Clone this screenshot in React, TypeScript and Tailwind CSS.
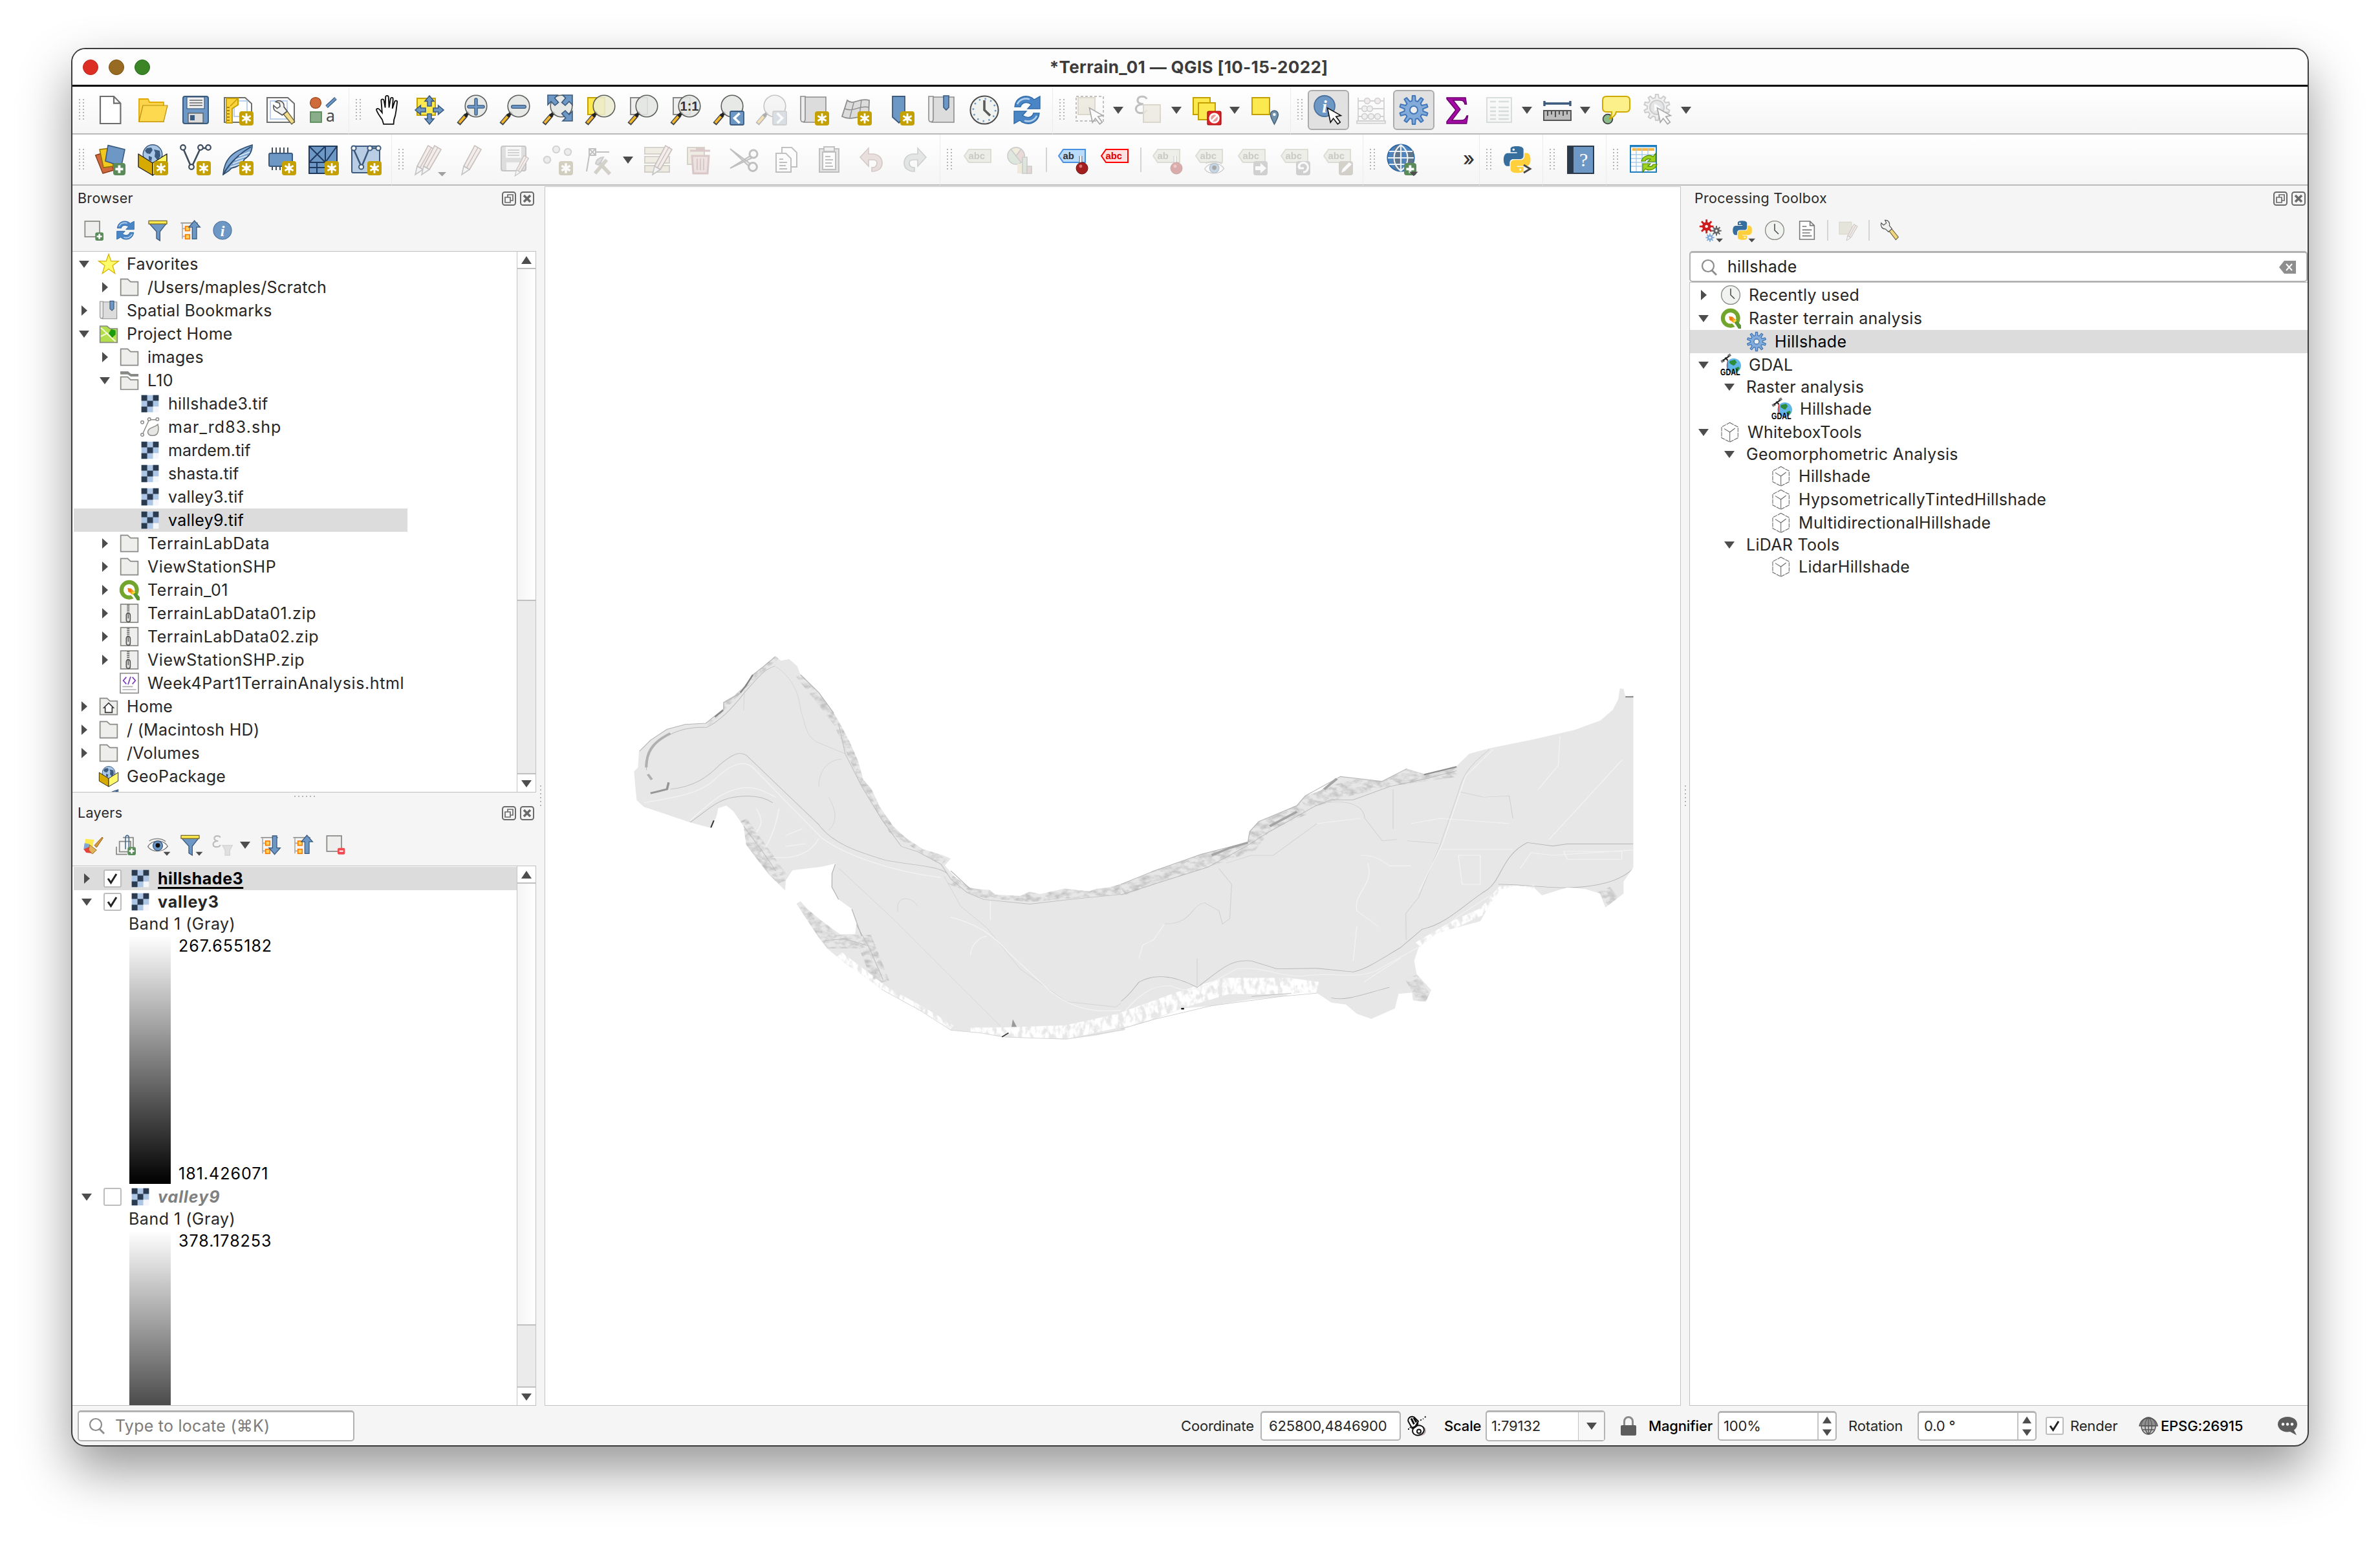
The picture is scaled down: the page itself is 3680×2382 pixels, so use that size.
import React from "react";

type Kids = { children?: React.ReactNode };

const BLUE = "#6d97c4";
const NAVY = "#3b5a7d";
const GOLD = "#c4a000";
const YEL = "#fce94f";
const GRY = "#888a85";

function gearPath(cx: number, cy: number, ro: number, ri: number, n: number) {
  let d = "";
  for (let i = 0; i < n; i++) {
    const a = (i / n) * Math.PI * 2 - Math.PI / 2;
    const s = Math.PI / n;
    const pts: [number, number][] = [
      [ri, a - s * 0.6],
      [ro, a - s * 0.32],
      [ro, a + s * 0.32],
      [ri, a + s * 0.6],
    ];
    for (const [r, t] of pts) d += `${d ? "L" : "M"}${(cx + r * Math.cos(t)).toFixed(2)} ${(cy + r * Math.sin(t)).toFixed(2)}`;
  }
  return d + "Z";
}

function Svg({ children, small, dim }: Kids & { small?: boolean; dim?: boolean }) {
  return (
    <svg viewBox="0 0 24 24" fill="none" className={`${small ? "h-8 w-8" : "h-12 w-12"} shrink-0 overflow-visible ${dim ? "opacity-35" : ""}`}>
      {children}
    </svg>
  );
}

/* ---------- shared icon parts ---------- */
const Star = () => (
  <g>
    <rect x="13" y="13" width="11" height="11" rx="2" fill={GOLD} />
    <path d="M18.500 14.600v7.800M15.200 16.600l6.600 3.800M21.800 16.600l-6.600 3.800" stroke="#fff" strokeWidth="1.400" />
    <circle cx="18.500" cy="18.500" r="1.700" fill="#fff" />
  </g>
);
const Plus = () => (
  <g>
    <rect x="14.500" y="14.500" width="9.500" height="9.500" rx="2" fill="#5a8c5a" />
    <path d="M19.200 16.200v6M16.200 19.200h6" stroke="#fff" strokeWidth="1.900" />
  </g>
);
const Drop = () => <path d="M18.500 21.200h6.800l-3.400 3.400z" fill="#4d4d4d" />;
const Lens = ({ children, fill = "#e4e6e4" }: Kids & { fill?: string }) => (
  <g>
    <path d="M1.500 22.800L7.500 15.800" stroke="#444" strokeWidth="3.400" />
    <path d="M2 22L6.600 16.800" stroke="#f2b62c" strokeWidth="1.900" />
    <path d="M6.400 17L9.600 13.600" stroke="#222" strokeWidth="2.400" />
    <circle cx="15" cy="9" r="8.400" fill={fill} fillOpacity=".88" stroke="#5d5f5c" strokeWidth=".8" />
    {children}
  </g>
);
const Page = () => <path d="M3 2.500h14l4.500 4.600V21.500H3z" fill="#fff" stroke="#6e6e6e" strokeWidth="1" />;
const Scroll = () => (
  <g stroke="#8c8c8c" strokeWidth=".8">
    <path d="M4.500 2h17v19.500H4.500z" fill="#dcdcdc" />
    <path d="M2 1.500h3.500v17.500c0 3-3.500 3-3.500 0z" fill="#ececec" />
  </g>
);
const Cursor = () => <path d="M12.500 9.500v11.500l2.800-2.600 2.400 5 2.200-1-2.300-4.900h3.900z" transform="rotate(-12 16 16)" fill="#fff" stroke="#111" strokeWidth=".8" />;
const Tag = ({ fill = "#d6d6c6", stroke = "#a5a591", text = "abc", color = "#6f6f63" }) => (
  <g>
    <path d="M5 4h17v10H5L1.500 9z" fill={fill} stroke={stroke} strokeWidth="1" />
    <text x="4.800" y="11.600" fontSize="7.400" letterSpacing="0" fontFamily="Liberation Sans, sans-serif" fontWeight="700" fill={color}>{text}</text>
  </g>
);
const Wrench = () => (
  <g>
    <path d="M11.500 12L20.500 23l2.300-2.200-8-11z" fill="#f2dc8a" stroke="#6b6240" strokeWidth=".7" />
    <path d="M9.500 13.500c-2.500-.5-3.500-2.800-3-5l2.700 2.300 2.300-1.500-.4-2.600-3-1c2.600-2 7-.2 6.400 4L17 13l-3.800 3z" fill="#f0f0ee" stroke="#555" strokeWidth=".8" />
  </g>
);
const Funnel = () => (
  <g>
    <path d="M2 4h20l-7.500 9.500V24l-4-2.500v-8z" fill={BLUE} stroke={NAVY} strokeWidth="1" />
    <rect x="1.500" y="1" width="21" height="3.600" fill={YEL} stroke="#6e6020" strokeWidth=".9" />
  </g>
);
const Arrows = () => (
  <g>
    <path d="M2.500 9.500C3 3 9.500-.5 15.800 2.600L17.500 4 22 1.500V11H12.500l3-3.200C12 5.300 8 6 7 9.500z" fill="#4a86c6" stroke="#2f6aa8" strokeWidth=".7" />
    <path d="M21.500 14.500c-.5 6.500-7 10-13.300 6.900L6.500 20 2 22.500V13h9.500l-3 3.200c3.500 2.500 7.500 1.800 8.500-1.700z" fill="#4a86c6" stroke="#2f6aa8" strokeWidth=".7" />
    <path d="M4.500 7.500C6 4 10 2.500 14 3.700" stroke="#b7d2ec" strokeWidth="1.200" />
    <path d="M19.500 16.500C18 20 14 21.500 10 20.300" stroke="#b7d2ec" strokeWidth="1.200" />
  </g>
);
const Box = () => (
  <g stroke="#222" strokeWidth=".7" strokeLinejoin="round">
    <circle cx="12" cy="7.800" r="7.400" fill="#a9c6e6" stroke={NAVY} />
    <path d="M7.500 3l3.500-.5 1 2-2 3-2.500-.5-1.500-2zM13 4l4.500 1 .5 4-2 3.500-2.500-3 .5-3zM9 9l2.500 1-.5 3-2-1z" fill={NAVY} stroke="none" />
    <path d="M1 7.500l11 7v9.500L1 17.500z" fill="#d6aa00" />
    <path d="M23 7.500l-11 7V24l11-6.500z" fill="#fff86a" />
  </g>
);
const Tree = () => (
  <g>
    <path d="M1 3.500h20" stroke={GRY} strokeWidth="1.200" />
    <path d="M3 4v18M3 10h4M3 19h4" stroke="#aaa" strokeWidth="1.200" />
    <rect x="6.500" y="7.500" width="5" height="5" fill="#ffd35c" stroke="#f57900" strokeWidth="1.200" />
    <rect x="6.500" y="17" width="5" height="5" fill="#ffd35c" stroke="#f57900" strokeWidth="1.200" />
  </g>
);
const Eye = () => (
  <g>
    <path d="M.5 14C5 6 18 5 23.500 13.500 18 21 5 21 .5 14z" fill="#fff" stroke="#777" strokeWidth="1" />
    <circle cx="12" cy="13" r="5.600" fill={BLUE} stroke={NAVY} />
    <circle cx="12" cy="12.500" r="2.600" fill="#111" />
    <path d="M2 7.500C7 4 16 4 21 8" stroke="#888" strokeWidth="1.100" />
  </g>
);
const Clock = ({ plain = false }) => (
  <g>
    <circle cx="12" cy="12" r="10.800" fill="#f0f3f0" stroke={plain ? GRY : "#4b4b4b"} strokeWidth="1" />
    {!plain && <circle cx="12" cy="12" r="8.600" stroke={BLUE} strokeWidth="1.300" strokeDasharray="1.200 3.300" />}
    <path d="M12 4.500V12l4.500 4.300" stroke={plain ? "#444" : "#5a5a5a"} strokeWidth={plain ? 1.1 : 1.8} />
  </g>
);
const Python = () => (
  <g>
    <path fill="#366f9e" d="M14.25.18l.9.2.73.26.59.3.45.32.34.34.25.34.16.33.1.3.04.26.02.2-.01.13V8.5l-.05.63-.13.55-.21.46-.26.38-.3.31-.33.25-.35.19-.35.14-.33.1-.3.07-.26.04-.21.02H8.77l-.69.05-.59.14-.5.22-.41.27-.33.32-.27.35-.2.36-.15.37-.1.35-.07.32-.04.27-.02.21v3.06H3.17l-.21-.03-.28-.07-.32-.12-.35-.18-.36-.26-.36-.36-.35-.46-.32-.59-.28-.73-.21-.88-.14-1.05-.05-1.23.06-1.22.16-1.04.24-.87.32-.71.36-.57.4-.44.42-.33.42-.24.4-.16.36-.1.32-.05.24-.01h.16l.06.01h8.16v-.83H6.18l-.01-2.75-.02-.37.05-.34.11-.31.17-.28.25-.26.31-.23.38-.2.44-.18.51-.15.58-.12.64-.1.71-.06.77-.04.84-.02 1.27.05z" />
    <path fill="#ffd03b" d="M21.1 6.11l.28.06.32.12.35.18.36.27.36.35.35.47.32.59.28.73.21.88.14 1.04.05 1.23-.06 1.23-.16 1.04-.24.86-.32.71-.36.57-.4.45-.42.33-.42.24-.4.16-.36.09-.32.05-.24.02-.16-.01h-8.22v.82h5.84l.01 2.76.02.36-.05.34-.11.31-.17.29-.25.25-.31.24-.38.2-.44.17-.51.15-.58.13-.64.09-.71.07-.77.04-.84.01-1.27-.04-1.07-.14-.9-.2-.73-.25-.59-.3-.45-.33-.34-.34-.25-.34-.16-.33-.1-.3-.04-.25-.02-.2.01-.13v-5.34l.05-.64.13-.54.21-.46.26-.38.3-.32.33-.24.35-.2.35-.14.33-.1.3-.06.26-.04.21-.02.13-.01h5.84l.69-.05.59-.14.5-.21.41-.28.33-.32.27-.35.2-.36.15-.36.1-.35.07-.32.04-.28.02-.21V6.07h2.09l.14.01z" />
    <circle cx="8.900" cy="3.100" r="1" fill="#fff" />
    <circle cx="15" cy="21" r="1" fill="#fff" />
  </g>
);
const Pin = () => (
  <g>
    <path d="M18.500 16V9" stroke="#777" strokeWidth="2.400" />
    <path d="M18.500 16V9" stroke="#fff" strokeWidth="1.200" />
    <circle cx="19.500" cy="18.500" r="4.500" fill="#a31f1f" stroke="#6b1111" strokeWidth=".5" />
    <circle cx="18.500" cy="17" r="1.200" fill="#d77" />
  </g>
);
const GearI = () => (
  <g stroke="#4077bb" strokeWidth="1" strokeLinejoin="round">
    <path d={gearPath(12, 12, 11, 7.2, 10)} fill="#83abd9" />
    <circle cx="12" cy="12" r="3" fill="#eee" />
  </g>
);
const Info = ({ cx = 12, cy = 12, r = 10.5 }) => (
  <g>
    <circle cx={cx} cy={cy} r={r} fill={BLUE} stroke="#4a719d" strokeWidth=".9" />
    <text x={cx} y={cy + r * 0.62} textAnchor="middle" letterSpacing="0" fontSize={r * 1.7} fontStyle="italic" fontWeight="700" fontFamily="Liberation Serif, serif" fill="#fff">i</text>
  </g>
);
const Pencil = ({ x = 0 }) => (
  <g transform={`translate(${x} 0)`}>
    <path d="M6 17L14.500 1l5 3L10.500 19.500z" fill="#e2d3cb" stroke="#6b4f4a" strokeWidth=".8" />
    <path d="M6 17l-1.500 6.500 6-4z" fill="#eee" stroke="#666" strokeWidth=".8" />
    <path d="M8.300 18L17 2.500" stroke="#6b4f4a" strokeWidth=".7" />
  </g>
);
/* reversed-three epsilon used by the expression tools */
const Eps = ({ x = 0 }) => <path d="M9.500 3.500C8.500 1 3 .8 2.500 4.200 2.300 6.500 4.500 7.500 7 7.500 3.500 7.500 1 8.800 1.200 11.500 1.500 15.500 8.500 15 9.500 12" transform={`translate(${x} 0)`} stroke="#555" strokeWidth="1.600" />;

/* ---------- icon set ---------- */
const icons: Record<string, React.ReactNode> = {
  new: <path d="M4.500 1.500H15l5.200 5.300V22.500H4.500zM15 1.500v5.300h5.200" fill="#fff" stroke="#6e6e6e" strokeWidth="1.100" />,
  open: (
    <g stroke="#e0a800" strokeWidth=".9" strokeLinejoin="round">
      <path d="M1.500 3.500h7l1 2.500h11v15H1.500z" fill="#fbd44b" />
      <path d="M4.500 8.500h19L20.500 21H1.500z" fill="#fdd94f" stroke="#b98e10" strokeWidth=".6" />
    </g>
  ),
  save: (
    <g>
      <rect x="2.500" y="1.500" width="19.500" height="21" rx="1.500" fill={BLUE} stroke={NAVY} strokeWidth="1" />
      <rect x="5.500" y="2" width="13.500" height="9" fill="#f0f0f0" stroke={NAVY} strokeWidth=".6" />
      <path d="M7.500 4.500h10M7.500 6.500h10M7.500 8.500h10" stroke="#666" strokeWidth=".8" />
      <rect x="6.500" y="14.500" width="11.500" height="7.500" fill="#dcdcdc" stroke="#555" strokeWidth=".6" />
      <rect x="8" y="16" width="3.500" height="4" fill={NAVY} />
    </g>
  ),
  layout: (
    <g>
      <path d="M1.500 2.500h16l5 4.600V21.500h-21z" fill="#fff" stroke="#6e6e6e" />
      <path d="M9 5h10v12H9z" stroke="#bcd0ef" />
      <path d="M3 3h9v5L7.500 11v11H3z" fill="#fbd23c" stroke={GOLD} />
      <path d="M11.500 3.500L6 9" stroke={GOLD} strokeWidth=".8" />
      <path d="M3.500 10h2M3.500 12.500h2M3.500 15h2M3.500 17.500h2M3.500 20h2" stroke="#8a6c00" strokeWidth=".8" />
      <Star />
    </g>
  ),
  layoutMgr: (
    <g>
      <path d="M1.500 2.500h16l5 4.600V21.500h-21z" fill="#fff" stroke="#6e6e6e" />
      <path d="M4 5h13v14H4z" stroke="#bcd0ef" />
      <Wrench />
    </g>
  ),
  style: (
    <g>
      <circle cx="6" cy="6.500" r="4.200" fill="#cf6b3a" stroke="#9c4a22" strokeWidth=".7" />
      <path d="M14.500 9.500L21.500 3" stroke="#35577d" strokeWidth="2.600" />
      <path d="M14.500 9.500L21.500 3" stroke={BLUE} strokeWidth="1.500" />
      <rect x="2" y="13.500" width="8.500" height="8" fill="#8aae8a" stroke="#5a8c5a" strokeWidth=".9" />
      <text x="14" y="21" fontSize="12.500" letterSpacing="0" fontFamily="Open Sans, sans-serif" fill="#444">a</text>
    </g>
  ),
  hand: (
    <path
      d="M8.500 23l-1-3.500C5.500 16.500 4 14.500 3.200 12c-.3-1.300 1.300-1.800 2.200-.5l2 2.500L6.700 4.500c0-1.500 1.900-1.500 2.100 0L9.700 10 10 1.700c0-1.500 2.100-1.500 2.200 0l.4 8.300 1.100-7c.2-1.400 2-1.100 1.900.2l-.5 7.500 1.700-5.400c.5-1.300 2.100-.9 1.900.4L17.800 13c-.3 3-.8 4.500-1.500 6.500l-.3 3.500z"
      transform="translate(.8 .4) scale(1.030 .98)"
      fill="#fff"
      stroke="#111"
      strokeWidth=".9"
    />
  ),
  pan: (
    <g>
      <path d="M2.500 3h14v13h-14z" fill={YEL} stroke={GOLD} />
      <path d="M12 1l3.500 4.200h-2V9h-3V5.200h-2zM12 23l3.500-4.200h-2V15h-3v3.800h-2zM1 12l4.200-3.500v2H9v3H5.200v2zM23 12l-4.200-3.500v2H15v3h3.800v2z" fill={BLUE} stroke={NAVY} strokeWidth=".8" />
    </g>
  ),
  zoomIn: (
    <Lens>
      <path d="M15 4v11M9.500 9.500h11" stroke={NAVY} strokeWidth="2.800" strokeLinecap="round" />
      <path d="M15 4v11M9.500 9.500h11" stroke={BLUE} strokeWidth="1.600" strokeLinecap="round" />
    </Lens>
  ),
  zoomOut: (
    <Lens>
      <path d="M10.500 9.500h9" stroke={NAVY} strokeWidth="3" strokeLinecap="round" />
      <path d="M10.500 9.500h9" stroke={BLUE} strokeWidth="1.800" strokeLinecap="round" />
    </Lens>
  ),
  zoomFull: (
    <g>
      <Lens />
      <g fill={BLUE} stroke={NAVY} strokeWidth=".8">
        <path d="M4.500.5h7.500L9.800 2.800l3 3.400L10 8.500 7 5.500 4.500 8z" />
        <path d="M23.500.5H16l2.300 2.300-3 3.400L18 8.500l3-3L23.500 8z" />
        <path d="M23.500 20.500H16l2.300-2.300-3-3.400L18 12.500l3 3 2.500-2.500z" />
      </g>
    </g>
  ),
  zoomSel: (
    <g>
      <rect x="2.500" y="2.500" width="13" height="13" fill={YEL} stroke={GOLD} />
      <Lens fill="#ececd2" />
    </g>
  ),
  zoomLayer: (
    <g>
      <rect x="2.500" y="2.500" width="13" height="13" fill="#eee" stroke="#888" />
      <Lens />
    </g>
  ),
  zoomNative: (
    <g>
      <rect x="2.500" y="2.500" width="13" height="13" fill="#eee" stroke="#888" />
      <Lens>
        <text x="15" y="12.600" textAnchor="middle" letterSpacing="0" fontSize="10" fontWeight="700" fontFamily="Liberation Sans, sans-serif" fill="#333">1:1</text>
      </Lens>
    </g>
  ),
  zoomLast: (
    <g>
      <Lens />
      <rect x="13.500" y="13" width="10.500" height="10.500" rx="1" fill={BLUE} stroke={NAVY} strokeWidth=".9" />
      <path d="M20.800 14.500l-4 3.800 4 3.800" stroke="#fff" strokeWidth="1.800" />
    </g>
  ),
  zoomNext: (
    <g>
      <Lens />
      <rect x="13.500" y="13" width="10.500" height="10.500" rx="1" fill="#9fb0bd" stroke="#888" strokeWidth=".9" />
      <path d="M16.800 14.500l4 3.800-4 3.800" stroke="#fff" strokeWidth="1.800" />
    </g>
  ),
  newMap: <g><Scroll /><Star /></g>,
  new3d: (
    <g>
      <path d="M5 4.500C10 9 14 2 22 4.500L21.500 18c-7-3-13 3-20.500-1z" fill="#dcdcdc" stroke="#8c8c8c" strokeWidth=".9" />
      <path d="M3 11c7 3 11-3 19-1M10 6.500L7 18M16 4l-1.500 12" stroke="#8c8c8c" strokeWidth=".7" />
      <Star />
    </g>
  ),
  newBm: <g><path d="M7 1.500h9.500v16L12 22l-5-4.500z" fill={BLUE} stroke={NAVY} strokeWidth=".9" /><Star /></g>,
  bookmarks: <g><Scroll /><path d="M13.500 1h4v9l-2 2-2-2z" fill={BLUE} stroke={NAVY} strokeWidth=".8" /></g>,
  clock: <Clock />,
  refresh: <Arrows />,
  select: (
    <g>
      <rect x="1" y="1.500" width="21" height="19" stroke="#555" strokeDasharray="2 1.500" />
      <rect x="2.500" y="2.500" width="13" height="13" fill="#d4ccb4" stroke="#a39a7a" />
      <Cursor />
    </g>
  ),
  selVal: (
    <g>
      <Eps x={1} />
      <rect x="8" y="8" width="13" height="13.500" fill="#d4ccb4" fillOpacity=".8" stroke="#a39a7a" />
    </g>
  ),
  deselect: (
    <g>
      <rect x="1.500" y="2.500" width="13" height="13" fill={YEL} stroke={GOLD} />
      <rect x="5.500" y="6.500" width="13" height="13" fill={YEL} stroke={GOLD} />
      <rect x="12.500" y="13" width="10.500" height="10.500" rx="1" fill="#d8262a" stroke="#a40000" strokeWidth=".6" />
      <circle cx="17.800" cy="18.300" r="3.400" fill="#e99" stroke="#fff" strokeWidth="1.400" />
      <path d="M15.500 20.700l4.700-4.700" stroke="#fff" strokeWidth="1.400" />
    </g>
  ),
  selLoc: (
    <g>
      <rect x="2" y="2.500" width="13.500" height="13" fill={YEL} stroke={GOLD} />
      <path d="M19.200 23c-2-4-3-5.500-3-7.500a3 3 0 016 0c0 2-1 3.500-3 7.500z" fill="#7293ab" stroke="#47657c" strokeWidth=".8" />
      <circle cx="19.200" cy="15.500" r="1.100" fill="#fff" />
    </g>
  ),
  identify: <g><Info cx={9} cy={9} r={8} /><Cursor /></g>,
  abacus: (
    <g stroke="#888" strokeWidth=".9">
      <path d="M2 2.500v18M22 2.500v18M2 5h20M2 11h20M2 17h20M1 20.500h22v1.800H1z" />
      {[[9, 5], [17, 5], [7, 11], [11, 11], [7, 17], [12, 17], [17, 17]].map(([x, y], i) => (
        <circle key={i} cx={x} cy={y} r="2.200" fill={y === 5 ? "#dcc" : "#dedede"} />
      ))}
    </g>
  ),
  gear: <GearI />,
  sigma: <path d="M4.500 2.500h14.500l.8 5h-1.300c-.7-2.500-1.500-3-4-3H9.500l5.500 7-6.500 8.500h7c2.500 0 3.500-.8 4.500-3.500h.8l-1 6H4.500v-1.500L11.500 12 4.500 3.500z" fill="#a40aa4" stroke="#66006a" strokeWidth=".7" />,
  table: (
    <g>
      <rect x="2.500" y="2.500" width="19" height="19" fill="#f5f5f5" stroke="#9aa" />
      <path d="M5 5.500h4.500M11.500 5.500h8M5 10h4.500M11.500 10h8M5 13h4.500M11.500 13h8M5 16h4.500M11.500 16h8M5 19h4.500M11.500 19h8" stroke="#9aa" strokeWidth="1.300" />
    </g>
  ),
  measure: (
    <g>
      <path d="M2 7h20M2 5v4M22 5v4" stroke={NAVY} strokeWidth="1.700" />
      <rect x="1.500" y="12.500" width="21" height="7.500" fill="#bdbdbd" stroke="#555" />
      <path d="M4.500 13v3.500M7.500 13v2.500M10.500 13v4.500M13.500 13v2.500M16.500 13v3.500M19.500 13v2.500" stroke="#333" strokeWidth=".8" />
    </g>
  ),
  tips: (
    <g>
      <circle cx="6" cy="19" r="3.700" fill="#8abb8a" stroke="#444" strokeWidth=".9" />
      <path d="M5 1.500h15c2 0 3 1 3 3v6c0 2-1 3-3 3h-7.500c-.5 3-3 4.500-5.500 5.500 1.500-1.500 2-3.500 2-5.500H5c-2 0-3-1-3-3v-6c0-2 1-3 3-3z" fill="#fbf08a" stroke="#cfa800" />
    </g>
  ),
  gearRun: (
    <g>
      <path d={gearPath(11, 10, 10, 7.5, 10)} fill="#e0e0e0" stroke="#777" />
      <circle cx="11" cy="10" r="5.500" fill="#b9bec3" stroke="#777" />
      <path d="M9 7l5 3-5 3z" fill="#fff" />
      <Cursor />
    </g>
  ),
  sources: (
    <g strokeLinejoin="round">
      <path d="M.8 8.500l8-2.500L15 20 6.500 22.500z" fill="#d06a3c" stroke="#8b3d1a" strokeWidth=".7" />
      <path d="M4 4l8.500-1L14.500 17l-7.500 1z" fill="#f0c81e" stroke="#8a6c00" strokeWidth=".7" />
      <path d="M10.500.8L23.500 4 20.800 17 8.500 13z" fill={BLUE} stroke={NAVY} strokeWidth=".8" />
      <Plus />
    </g>
  ),
  gpkgNew: <g><Box /><Star /></g>,
  shpNew: (
    <g>
      <path d="M2.500 3L9 18 16 3h6" stroke="#3c4c5c" strokeWidth="1.300" />
      {[[2.500, 2.500], [9, 17.500], [16, 2.500], [22, 2.500]].map(([x, y], i) => (
        <circle key={i} cx={x} cy={y} r="1.900" fill="#fff" stroke="#3c4c5c" strokeWidth="1.100" />
      ))}
      <Star />
    </g>
  ),
  feather: (
    <g>
      <path d="M.5 23.500C1 15 5 8 14 4c4-2 6-2.500 9-3.500 0 4-1 8-6 11-1 3-5 6-10 7l-2 2z" fill="#7fa8d4" stroke="#2c4a6b" strokeWidth=".8" />
      <path d="M.5 23.500C5 15 12 8 22 2" stroke="#2c4a6b" strokeWidth="1" />
      <path d="M8 15l8-3M6 17.500l7-2M10 12l9-3M13 9l8-3" stroke="#dce9f5" strokeWidth=".9" />
      <Star />
    </g>
  ),
  memory: (
    <g>
      <path d="M5.500 2.500v5M8.500 2.500v5M11.500 2.500v5M14.500 2.500v5M17.500 2.500v5M5.500 16v4M8.500 16v4M11.500 16v4" stroke="#2c3e50" strokeWidth=".9" />
      <rect x="3" y="7" width="18" height="10" rx="1" fill={BLUE} stroke={NAVY} />
      <Star />
    </g>
  ),
  mesh: (
    <g stroke="#1f3a5f" strokeWidth="1">
      <rect x="1" y="1.500" width="21.500" height="21" fill={BLUE} />
      <path d="M1 14h21.500M13.500 1.500V14M7 14v8.500M13.500 14v8.500M1 1.500L13.500 14M13.500 1.500L1 14M22.500 1.500L13.500 14M1 18h12.500" />
      <g stroke="none"><Star /></g>
    </g>
  ),
  gpx: (
    <g>
      <rect x="1" y="1.500" width="21.500" height="20.500" rx="1" fill="#b9cde4" stroke={NAVY} />
      <path d="M2 3l6.500 14.500L14.500 3 22 3" stroke={NAVY} strokeWidth="1.300" />
      {[[2.500, 3], [8.300, 17.500], [15, 3], [21.500, 3]].map(([x, y], i) => (
        <circle key={i} cx={x} cy={y} r="1.800" fill="#fff" stroke={NAVY} />
      ))}
      <Star />
    </g>
  ),
  edits: <g><Pencil x={-3.5} /><Pencil x={1.5} /><path d="M18.500 21.500h6.500l-3.200 3.300z" fill="#000" /></g>,
  pencil: <Pencil x={-.5} />,
  saveEdit: (
    <g>
      <rect x="1.500" y="1.500" width="19" height="19" rx="1.500" fill="#aaa" stroke="#666" />
      <rect x="5" y="2" width="12" height="8.500" fill="#eee" />
      <path d="M6.500 4.500h9M6.500 6.500h9M6.500 8.500h9" stroke="#888" strokeWidth=".9" />
      <rect x="5.500" y="14" width="10" height="6" fill="#eee" />
      <g transform="translate(9 8) scale(.7)"><Pencil /></g>
    </g>
  ),
  addPts: (
    <g>
      {[[11, 4], [20, 6], [4, 12]].map(([x, y], i) => (
        <circle key={i} cx={x} cy={y} r="2.600" fill="#cdd3cd" stroke="#888" />
      ))}
      <rect x="13" y="13" width="11" height="11" rx="2" fill="#8c8358" />
      <path d="M18.500 14.600v7.800M15.200 16.600l6.600 3.800M21.800 16.600l-6.600 3.800" stroke="#fff" strokeWidth="1.800" />
    </g>
  ),
  advDig: (
    <g stroke="#555" strokeWidth="1">
      <path d="M3.500 3.500h5v5h-5zM8.500 6H19M3.500 9L1.500 21M3.500 3.500l5 5M8.500 3.500l-5 5" />
      <path d="M8 22.500L17 12M11 14l8.500 9" strokeWidth="2.800" stroke="#8c8870" />
      <path d="M8.500 15c.5-3 3-5 6-5l-1.500 3-2.500 3z" fill="#aaa" stroke="#777" />
    </g>
  ),
  multiEdit: (
    <g>
      <path d="M1.500 2.500h19v5h-19zM1.500 9.500h19v5h-19zM1.500 16.500h19v5h-19z" fill="#d6d2b8" stroke="#8c8870" />
      <g transform="translate(3 0)"><Pencil /></g>
    </g>
  ),
  trash: (
    <g>
      <path d="M1.500 2.500h13v13h-13z" fill="#d6d2b8" stroke="#8c8870" />
      <path d="M3.500 5h15.500M8 3.500h6M5 9h13l-1 13.500H6z" fill="#d8b8b8" stroke="#a06a6a" strokeWidth="1.500" />
      <path d="M9 11v9M11.500 11v9M14 11v9" stroke="#a06a6a" />
    </g>
  ),
  cut: (
    <g stroke="#555" strokeWidth="1">
      <path d="M1.500 3.500L17 15l-1.500 1.500zM1.500 18.500L17 9l1.500 1.500z" fill="#ccc" />
      <circle cx="19.500" cy="7.500" r="3" strokeWidth="1.500" /><circle cx="19" cy="17.500" r="3.200" strokeWidth="1.500" />
    </g>
  ),
  copy: (
    <g fill="#fff" stroke="#555" strokeWidth="1">
      <path d="M8.500 2.500H16l4 4v11H8.500z" />
      <path d="M4 7h7.500l4 4v10.500H4z" />
      <path d="M6.500 11.500h3M6.500 14h6M6.500 16.500h5M6.500 19h6" />
    </g>
  ),
  paste: (
    <g stroke="#555" strokeWidth="1">
      <path d="M4.500 3.500h15v18h-15z" fill="#bbb" />
      <path d="M7 6h10v13.500H7z" fill="#fff" />
      <path d="M8 2h8v3.500H8z" fill="#ddd" />
      <path d="M9 9.500h4M9 12h6M9 14.500h5M9 17h6" />
    </g>
  ),
  undo: <path d="M3 10L9.500 3v4.500h3c5 0 7.500 3.500 7.500 7 0 4-3 6.500-8 6.500v-3c3 0 4-1.500 4-3.500s-1-2.500-3.500-2.500h-3V17z" fill="#c8b0a8" stroke="#8c7068" strokeWidth=".8" />,
  redo: <path d="M21 10L14.500 3v4.500h-3C6.500 7.500 4 11 4 14.500c0 4 3 6.500 8 6.500v-3c-3 0-4-1.500-4-3.500s1-2.500 3.500-2.500h3V17z" fill="#b8c0bc" stroke="#78827e" strokeWidth=".8" />,
  tag: <Tag />,
  diagram: (
    <g strokeWidth=".8">
      <circle cx="8.500" cy="9" r="6.500" fill="#a8bfa8" stroke="#777" />
      <path d="M8.500 9L4.500 3.800a6.500 6.500 0 018 0z" fill="#ddd0a0" stroke="#777" />
      <path d="M8.500 9l4-5.200a6.500 6.500 0 010 10.300z" fill="#c89a9a" stroke="#777" />
      <path d="M9.500 15h4v7.500h-4z" fill="#ddd0a0" /><path d="M13.500 10h3.500v12.500h-3.500z" fill="#a8bfa8" stroke="#777" /><path d="M17 17h3.500v5.500H17z" fill="#c89a9a" stroke="#777" />
    </g>
  ),
  tagPin: <g><Tag fill="#b9dcfb" stroke="#4a90e2" text="ab" color="#333" /><Pin /></g>,
  tagRed: <Tag fill="#ffe0e0" stroke="#ff0000" color="#e00000" />,
  tagPinD: <g><Tag text="ab" /><Pin /></g>,
  tagEye: <g><Tag /><g transform="translate(8 10) scale(.65)"><Eye /></g></g>,
  tagMove: <g><Tag /><rect x="13" y="13" width="11" height="11" rx="2" fill="#888" /><path d="M14.500 17h4v-2.500l4.500 4-4.500 4V20h-4z" fill="#fff" /></g>,
  tagRot: <g><Tag /><rect x="13" y="13" width="11" height="11" rx="2" fill="#888" /><path d="M15 18a3.600 3.600 0 117 1c-.5 1.800-2 2.500-3.500 2.500M15.500 15v3.500H19" stroke="#fff" strokeWidth="1.500" /></g>,
  tagEdit: <g><Tag /><rect x="13" y="13" width="11" height="11" rx="2" fill="#8c8870" /><path d="M15 22l1-3 5-5 2 1.500-5.300 5.300z" fill="#fff" /></g>,
  globe: (
    <g>
      <circle cx="12" cy="10.500" r="10.300" fill="#4f86c0" stroke="#2f6aa8" strokeWidth="1" />
      <path d="M8 1.500c-3 5-3 13 0 18l4 .8V.5zM16 5h6v11h-6z" fill="#6b6b6b" fillOpacity=".65" />
      <path d="M12 .5v20M3 5.500h18M2 10.500h20M3 15.500h18M12 .5c-7 5-7 15 0 20M12 .5c7 5 7 15 0 20" stroke="#e8f0f8" strokeWidth="1.100" />
      <Plus /><Drop />
    </g>
  ),
  pyConsole: <g><g transform="translate(1.500 1.500) scale(.86)"><Python /></g><path d="M17 16l5 3-5 3" stroke="#444" strokeWidth="1.400" /></g>,
  help: (
    <g>
      <rect x="2" y="1.500" width="20" height="21" fill={BLUE} stroke="#1e2c3a" strokeWidth=".9" />
      <rect x="2" y="1.500" width="4.500" height="21" fill="#2b3a4a" />
      <text x="14.500" y="17" textAnchor="middle" fontSize="15" fontFamily="Liberation Serif, serif" fill="#fff">?</text>
    </g>
  ),
  sync: (
    <g>
      <rect x="1.500" y="1" width="20" height="20.500" fill="#fff" stroke="#1d7fc0" strokeWidth="1" />
      <path d="M1.500 1.500h20" stroke="#1d7fc0" strokeWidth="1.600" />
      <path d="M3 4h17" stroke="#f6b545" strokeWidth="2" />
      <path d="M2 8h19M2 11h19M2 14h19M2 17h19M6 3v18M10.500 3v18M15 3v18" stroke="#a9cbe8" strokeWidth=".7" />
      <path d="M10 13c1-4 6-5.500 9-3.500L21 7v6.500h-6l2-2c-2-.5-3.500 0-4 1.500zM22 15.500c-1 4-6 5.500-9 3.500L11 21.500V15h6l-2 2c2 .5 3.500 0 4-1.500z" fill="#9ed21e" stroke="#4e8a00" strokeWidth=".6" />
    </g>
  ),
  /* panel icons */
  addLayer: <g><rect x="2.500" y="1.500" width="17" height="18" fill="#eeeeec" stroke={GRY} strokeWidth="1.300" /><Plus /></g>,
  filter: <Funnel />,
  filterD: <g><Funnel /><path d="M18.500 20h8l-4 4.500z" fill="#4d4d4d" /></g>,
  collapse: <g><Tree /><path d="M17 .8l6.500 7.500H19.500V22h-5V8.300H10.500z" fill={BLUE} stroke={NAVY} /></g>,
  expand: <g><Tree /><path d="M17 23l6.500-7.500H19.500V1.500h-5v14H10.500z" fill={BLUE} stroke={NAVY} /></g>,
  info: <Info />,
  brush: (
    <g>
      <path d="M3 5l10 1-2 9-9-1z" fill={YEL} />
      <path d="M2 10l6 1-1 7-6-1z" fill="#7fa8d4" />
      <path d="M1 17l7-3 5 8-9-1z" fill="#e8403a" />
      <path d="M8 12l8 6-5 4.500L7 18z" fill="#e3b35c" stroke="#9a6a1c" strokeWidth=".7" />
      <path d="M13.500 12.500L22.500 3l1 1-7.500 11z" fill="#d79a3a" stroke="#8c5a14" strokeWidth=".7" />
    </g>
  ),
  addGroup: (
    <g stroke={GRY} strokeWidth="1.300">
      <path d="M1.500 14v9H14M5 8h13v12H5zM9 3.500h12v12" />
      <path d="M12 17V4c0-4 4-4 4 0v11" stroke="#466a90" strokeWidth="1.200" />
      <g stroke="none"><Plus /></g>
    </g>
  ),
  eye: <g><Eye /><path d="M18.500 20h8l-4 4.500z" fill="#4d4d4d" /></g>,
  epsF: (
    <g>
      <Eps x={0} />
      <path d="M12 12.500h11.500l-3 5.500v6h-5.500v-6z" fill="#bbb" stroke="#999" />
    </g>
  ),
  remove: (
    <g>
      <rect x="2.500" y="1.500" width="17" height="18" fill="#eeeeec" stroke={GRY} strokeWidth="1.300" />
      <rect x="15" y="15.500" width="8.500" height="7.500" rx="1.500" fill="#ef4b50" />
      <path d="M17 19.200h4.500" stroke="#fff" strokeWidth="1.500" />
    </g>
  ),
  gears3: (
    <g>
      <path d={gearPath(8, 7.5, 8.2, 5, 8)} fill="#cf1b1b" /><circle cx="8" cy="7.500" r="1.700" fill="#fff" />
      <path d={gearPath(19.500, 12.500, 5.8, 3.6, 8)} fill="#666" /><circle cx="19.500" cy="12.500" r="1.300" fill="#fff" />
      <path d={gearPath(12, 20.500, 5, 3.2, 8)} fill="#83abd9" /><circle cx="12" cy="20.500" r="1.100" fill="#fff" />
      <path d="M19 21.500h8l-4 4.300z" fill="#4d4d4d" />
    </g>
  ),
  pyMenu: <g><g transform="translate(1 1) scale(.92)"><Python /></g><path d="M19 21.500h8l-4 4.300z" fill="#4d4d4d" /></g>,
  history: <Clock plain />,
  log: <path d="M3.500 1.500h12l5 5V22.500h-17zM15.500 1.500v5h5M6.500 7.500h5M6.500 11.500h11M6.500 15h9M6.500 18.500h11" fill="#fff" stroke="#777" strokeWidth="1.200" />,
  editIn: <g><rect x="1.500" y="2.500" width="14" height="14" fill="#c9c5aa" stroke="#aaa58c" /><g transform="translate(6 4) scale(.85)"><Pencil /></g></g>,
  wrench: <g transform="translate(-1.500 -1)"><path d="M10.500 11L20.500 24l3-3.200-9-11z" fill="#f0d77e" stroke="#6b6240" strokeWidth=".8" /><path d="M8.500 11.500C4.500 11.500 2.500 8 3.500 4.500L6.500 7l3-2.500-1.500-3.200C11.500.8 14 4 13 7.500l3 3.800-4 3.500z" fill="#f0f0ee" stroke="#555" strokeWidth=".9" /></g>,
  /* tree icons */
  star: <path d="M12 .5l2.900 8.200h8.600l-6.900 5.200 2.600 9.100L12 17.800 4.800 23l2.600-9.100L.5 8.700h8.600z" fill="#fdfb6a" stroke="#d8b400" strokeWidth="1" />,
  folder: <path d="M2 2.500h8l3.500 3.300H22V21.500H2z" fill="#eeeeec" stroke={GRY} strokeWidth="1.300" />,
  folderOpen: <g><path d="M1.500 1.500h9L14 4.500h8.500v3h-9L10 5H1.500z" fill={GRY} /><path d="M2 8h8l3.500 3.300H22V22.500H2z" fill="#eeeeec" stroke={GRY} strokeWidth="1.300" /></g>,
  scroll: <g><Scroll /><path d="M13.500 1h4.500v9l-2.200 2-2.300-2z" fill={BLUE} stroke={NAVY} strokeWidth=".9" /></g>,
  projHome: (
    <g>
      <path d="M2 3h8l3.500 3H22v16H2z" fill="#b4df4c" stroke={GRY} strokeWidth="1.300" />
      <path d="M3 5l17 16M3 15l8-4" stroke="#f4f8d8" strokeWidth="1.600" />
      <path d="M15 6.500l5 1.500v5l-4 3.500-4-5z" fill="#1c9a10" />
    </g>
  ),
  raster: (
    <g>
      <path d="M2 2h20v13.400h-6.500V22H2z" fill="#adc6e5" />
      <path d="M2 2h6.700v6.700H2zM15.400 2H22v6.700h-6.600zM8.700 8.700h6.700v6.700H8.700zM2 15.400h6.700V22H2z" fill="#2b3b4f" />
      <path d="M15.600 15.600H22V22h-6.400z" fill="#f4f6fa" />
    </g>
  ),
  vector: (
    <g stroke={GRY} strokeWidth="1.100" fill="#fff">
      <path d="M3 21L11 3.500h9" fill="none" />
      <circle cx="3" cy="6.500" r="1.700" /><circle cx="3" cy="21" r="1.700" /><circle cx="11" cy="3" r="1.700" /><circle cx="20.500" cy="3" r="1.700" />
      <path d="M21 9c1.500 6 1 13-6 13-5.500 0-7-4-4-7.500 3-2.500 7-2.500 10-5.500z" fill="#e6e6e4" />
    </g>
  ),
  qgis: (
    <g>
      <circle cx="11.800" cy="11.800" r="8.900" stroke="#71a52b" strokeWidth="4.600" />
      <path d="M13.500 11.500L24 20v4h-5l-7.500-8.500z" fill="#fff" />
      <path d="M15 15l5 .5 4 4.500v4h-3z" fill="#589632" />
      <path d="M10 10l4.500 .5 4 4-3 3L11 14z" fill="#f0a02c" />
      <path d="M10 10l4 .3.500 3.700-3.500.5z" fill="#ee7913" />
      <path d="M15 15l3-1.500 1 1.500-3 2z" fill="#f7e32a" />
    </g>
  ),
  zip: (
    <g>
      <rect x="2" y="1.500" width="20" height="21" fill="#eeeeec" stroke={GRY} strokeWidth="1.300" />
      <path d="M10.700 2v10" stroke="#666" strokeWidth="3" strokeDasharray="1.200 1" />
      <rect x="8.500" y="12" width="4.500" height="10" rx="2.200" fill="#ddd" stroke="#555" strokeWidth="1.200" />
      <path d="M10.700 13v5" stroke="#555" />
    </g>
  ),
  html: (
    <g>
      <rect x="1.500" y=".5" width="21" height="23" fill="#fff" stroke={GRY} strokeWidth="1.200" />
      <path d="M8.500 5L5 9l3.500 4M15.500 5L19 9l-3.500 4M13.500 4.500l-3 9" stroke="#7b3fc0" strokeWidth="1.300" />
      <path d="M4 16h12M4 19.500h16" stroke="#b0b0b0" strokeWidth="1.200" />
    </g>
  ),
  home: <g><path d="M2 2.500h8l3.500 3.300H22V21.500H2z" fill="#eeeeec" stroke={GRY} strokeWidth="1.300" /><path d="M12 8l5.500 5.500H16V19H8v-5.500H6.500z" fill="#fff" stroke="#333" strokeWidth="1.200" /></g>,
  gpkg: <Box />,
  gdal: (
    <g>
      <circle cx="15.500" cy="13" r="8.500" fill="#62b6e8" />
      <path d="M11 7.500l6-1.500 2 3-3 4-2.500-1-3-2zM17 16l4-2 1.500 2-3 4z" fill="#2c8c3a" />
      <path d="M8.500 6v10" stroke="#d33" strokeWidth="1" />
      <path d="M1 8.500l3.500-2M9 2L12 0" stroke="#777" strokeWidth="3" />
      <path d="M3 7l7-5M5.500 3.500l3 3" stroke="#222" strokeWidth="1.600" />
      <text x="0" y="24" fontSize="10.500" letterSpacing="0" textLength="23" lengthAdjust="spacingAndGlyphs" fontWeight="700" fontFamily="Liberation Sans, sans-serif" fill="#000">GDAL</text>
    </g>
  ),
  cube: (
    <g stroke="#666" strokeWidth=".8" strokeLinejoin="round">
      <path d="M11 1L20.500 6v12.500L11 23.500 1.500 18.500V6z" fill="#fff" strokeDasharray="5 .8" />
      <path d="M4.500 8L11 12v11M11 12l6-4.500" />
    </g>
  ),
};

const DIM = new Set(["zoomNext", "select", "selVal", "abacus", "table", "gearRun", "edits", "pencil", "saveEdit", "addPts", "advDig", "multiEdit", "trash", "cut", "copy", "paste", "undo", "redo", "tag", "diagram", "tagPinD", "tagEye", "tagMove", "tagRot", "tagEdit", "epsF", "editIn"]);

const Icon = ({ n, small }: { n: string; small?: boolean }) => <Svg small={small} dim={DIM.has(n)}>{icons[n]}</Svg>;

function Tri({ dir, className = "" }: { dir: "up" | "down" | "right"; className?: string }) {
  const d = { up: "M0 12L8 0l8 12z", down: "M0 1h16L8 12z", right: "M4 0l9 8-9 8z" }[dir];
  return (
    <svg viewBox={dir === "right" ? "0 0 16 16" : "0 0 16 12"} className={`shrink-0 ${dir === "right" ? "h-4 w-4" : "h-3 w-4"} ${className}`}>
      <path d={d} fill="#4d4d4d" />
    </svg>
  );
}

/* ---------- toolbars ---------- */
const Handle = () => (
  <svg viewBox="0 0 8 34" className="ml-[10px] mr-[7px] h-[34px] w-2 shrink-0">
    {[0, 5, 10, 15, 20, 25, 30].map((y) => (
      <g key={y} fill="#b4b4b4"><rect x="0" y={y} width="2" height="2" /><rect x="6" y={y} width="2" height="2" /></g>
    ))}
  </svg>
);

function Group({ items, extra, last }: { items: string[]; extra?: React.ReactNode; last?: boolean }) {
  return (
    <div className={`flex h-full items-center border-b-2 border-[#bababa] bg-linear-to-b from-white to-[#f5f5f5] ${last ? "flex-1" : "border-r border-r-[#ececec] pr-[6px]"}`}>
      <Handle />
      {items.map((it, i) => {
        if (it === "|") return <div key={i} className="mx-[6px] h-[38px] w-[2px] bg-[#d4d4d4]" />;
        const [name, flag] = it.split(":");
        return (
          <div key={i} className="flex items-center">
            <div className={`flex h-[62px] items-center justify-center ${flag === "on" ? "mx-[1px] w-[64px] rounded-md border-2 border-[#ababab] bg-[#e1e1e1]" : "w-[66px]"}`}>
              <Icon n={name} />
            </div>
            {flag === "dd" && <div className="flex w-6"><Tri dir="down" className="ml-[2px]" /></div>}
          </div>
        );
      })}
      {extra}
    </div>
  );
}

const PanelTitle = ({ children }: Kids) => (
  <div className="flex h-10 items-center pl-2 pr-[3px]">
    <span className="flex-1 text-[21.5px] leading-none text-[#2a2a2a]">{children}</span>
    <svg viewBox="0 0 22 22" className="h-[22px] w-[22px]" fill="none" stroke="#6a6a6a" strokeWidth="2">
      <rect x="1" y="1" width="20" height="20" rx="3.500" /><path d="M9 9V5h8v9h-4M5 9h8v8H5z" strokeWidth="1.700" />
    </svg>
    <svg viewBox="0 0 22 22" className="ml-[6px] h-[22px] w-[22px]" fill="none" stroke="#6a6a6a" strokeWidth="2">
      <rect x="1" y="1" width="20" height="20" rx="3.500" /><path d="M6 6l10 10M16 6L6 16" strokeWidth="3.600" />
    </svg>
  </div>
);

const PanelBar = ({ items }: { items: string[] }) => (
  <div className="mb-[3px] flex h-[58px] items-center pl-[7px]">
    {items.map((it, i) => {
      if (it === "|") return <div key={i} className="mx-[6px] h-8 w-[2px] bg-[#d4d4d4]" />;
      const [name, flag] = it.split(":");
      return (
        <div key={i} className="flex items-center">
          <div className="flex w-[50px] justify-center"><Icon n={name} small /></div>
          {flag === "dd" && <div className="flex w-6"><Tri dir="down" className="ml-[2px]" /></div>}
        </div>
      );
    })}
  </div>
);

const ScrollBar = ({ thumb }: { thumb: string }) => (
  <div className="flex w-[29px] shrink-0 flex-col border-l border-[#c4c4c4] bg-linear-to-r from-[#f4f4f4] to-white">
    <div className="flex h-[27px] items-center justify-center border-b-2 border-[#c0c0c0] bg-white"><Tri dir="up" /></div>
    <div className="flex-1" />
    <div className={`border-y-2 border-[#c0c0c0] bg-[#ebebeb] ${thumb}`} />
    <div className="flex h-[27px] items-center justify-center bg-white"><Tri dir="down" /></div>
  </div>
);

type Row = [level: number, arrow: string, icon: string, text: string, tracking?: string];
const WIDE = "tracking-[.6px]";
const browserRows: Row[] = [
  [0, "down", "star", "Favorites"],
  [1, "right", "folder", "/Users/maples/Scratch", "tracking-[.25px]"],
  [0, "right", "scroll", "Spatial Bookmarks"],
  [0, "down", "projHome", "Project Home"],
  [1, "right", "folder", "images"],
  [1, "down", "folderOpen", "L10"],
  [2, "", "raster", "hillshade3.tif"],
  [2, "", "vector", "mar_rd83.shp", "tracking-[1.050px]"],
  [2, "", "raster", "mardem.tif", "tracking-[0px]"],
  [2, "", "raster", "shasta.tif", "tracking-[.1px]"],
  [2, "", "raster", "valley3.tif"],
  [2, "sel", "raster", "valley9.tif"],
  [1, "right", "folder", "TerrainLabData", WIDE],
  [1, "right", "folder", "ViewStationSHP", WIDE],
  [1, "right", "qgis", "Terrain_01", WIDE],
  [1, "right", "zip", "TerrainLabData01.zip", WIDE],
  [1, "right", "zip", "TerrainLabData02.zip", "tracking-[.55px]"],
  [1, "right", "zip", "ViewStationSHP.zip", WIDE],
  [1, "", "html", "Week4Part1TerrainAnalysis.html", WIDE],
  [0, "right", "home", "Home"],
  [0, "right", "folder", "/ (Macintosh HD)"],
  [0, "right", "folder", "/Volumes"],
  [0, "", "gpkg", "GeoPackage"],
  [0, "", "feather", ""],
];
const indent = ["pl-0", "pl-8", "pl-16"];

const BrowserTree = () => (
  <div className="flex h-[837px] border-y border-r border-[#c0c0c0] bg-white">
    <div className="h-full flex-1 overflow-hidden pl-[2px] pt-[1px]">
      {browserRows.map(([lv, arrow, icon, text, tracking], i) => (
        <div key={i} className={`flex h-9 w-[516px] items-center ${indent[lv]} ${arrow === "sel" ? "bg-[#dcdcdc]" : ""}`}>
          <div className="flex w-8 justify-center">{arrow === "right" && <Tri dir="right" />}{arrow === "down" && <Tri dir="down" />}</div>
          <div className="ml-[6px] flex w-8 justify-center"><Icon n={icon} small /></div>
          <span className={`ml-[12px] whitespace-pre ${tracking ?? ""} ${arrow === "sel" ? "text-black" : ""}`}>{text}</span>
        </div>
      ))}
    </div>
    <ScrollBar thumb="h-[270px]" />
  </div>
);

const Check = ({ on }: { on: boolean }) => (
  <div className="h-7 w-7 shrink-0 rounded-[3px] border-2 border-[#bdbdbd] bg-white">
    {on && <svg viewBox="0 0 24 24" className="h-6 w-6" fill="none" stroke="#222" strokeWidth="3"><path d="M5 12l4.500 6.500L18 5" /></svg>}
  </div>
);

const LayerRow = ({ open, on, sel, children }: Kids & { open: boolean; on: boolean; sel?: boolean }) => (
  <div className={`flex h-9 items-center pl-[12px] ${sel ? "bg-[#dcdcdc]" : ""}`}>
    <Tri dir={open ? "down" : "right"} />
    <div className="ml-[18px]"><Check on={on} /></div>
    <div className="ml-[13px] mr-[11px]"><Icon n="raster" small /></div>
    {children}
  </div>
);

const Legend = ({ hi, lo }: { hi: string; lo: string }) => (
  <>
    <div className="flex h-8 items-center pl-[85px]"><span className="tracking-[.5px]">Band 1 (Gray)</span></div>
    <div className="flex h-[388px] py-[2px] pl-[86px] text-black">
      <div className="w-16 bg-linear-to-b/srgb from-white to-black" />
      <div className="flex flex-col justify-between pl-[12px] leading-8">
        <span className="tracking-[1px]">{hi}</span>
        <span className="tracking-[1px]">{lo}</span>
      </div>
    </div>
  </>
);

const LayersTree = () => (
  <div className="flex h-[835px] border-y border-r border-[#c0c0c0] bg-white">
    <div className="h-full flex-1 overflow-hidden pl-[2px] pt-[1px]">
      <LayerRow open={false} on sel><span className="font-bold tracking-[.55px] text-black underline decoration-[3px] underline-offset-[4px]">hillshade3</span></LayerRow>
      <LayerRow open on><span className="font-bold tracking-[.9px]">valley3</span></LayerRow>
      <Legend hi="267.655182" lo="181.426071" />
      <LayerRow open on={false}><span className="font-bold italic tracking-[1px] text-[#808080]">valley9</span></LayerRow>
      <Legend hi="378.178253" lo="" />
    </div>
    <ScrollBar thumb="h-[98px]" />
  </div>
);

/* ---------- hillshade raster ---------- */
const westShape =
  "508,80 525,98 550,92 575,118 583,145 600,165 640,215 685,290 705,330 735,400 760,470 775,535 800,570 825,635 865,705 905,750 955,790 1015,812 1040,825 1022,850 1050,890 1098,932 1130,938 1158,940 1175,957 1250,962 1278,946 1310,955 1385,935 1460,945 1478,937 1520,930 1568,914 1568,1453 1480,1475 1390,1488 1300,1485 1200,1480 1130,1465 1040,1455 1000,1420 950,1385 870,1330 830,1305 780,1260 720,1210 665,1155 640,1115 610,1060 572,990 585,982 605,1010 650,1055 705,1103 750,1102 755,1060 740,1010 700,975 678,930 680,880 692,842 650,855 610,860 560,868 540,905 538,942 490,885 420,775 412,705 380,650 360,630 335,640 330,670 313,712 250,692 110,635 88,610 84,560 80,505 92,490 95,430 130,390 180,350 235,332 297,328 350,280 350,250 385,225 415,190 440,150 470,120";
const eastShape =
  "60,850 100,830 150,798 215,770 280,735 340,715 410,690 415,650 440,610 490,585 545,550 568,515 610,495 665,442 725,452 780,460 848,412 895,432 985,402 1020,355 1075,335 1200,300 1310,265 1380,230 1415,190 1430,150 1435,108 1445,110 1450,140 1472,135 1472,785 1445,840 1445,885 1395,938 1380,885 1340,868 1290,862 1220,892 1200,865 1150,855 1105,870 1080,920 1050,990 990,1012 930,1035 880,1090 868,1140 875,1190 915,1250 900,1295 865,1290 862,1260 825,1265 815,1320 750,1360 710,1340 680,1305 640,1298 600,1262 560,1258 500,1275 420,1285 310,1310 230,1320 150,1362 60,1398";

const westDark = [
  "M508 118C470 130 450 170 415 215 380 270 340 320 300 343 240 340 190 360 150 400 120 440 115 470 118 500",
  "M700 330L720 440 770 560 830 680 890 780 940 800 1010 845 1040 900 1090 950 1140 975 1280 992 1400 975 1568 955",
  "M250 692C300 650 330 610 380 600 430 590 470 595 500 620",
  "M190 570C260 560 300 530 340 480 380 440 400 430 420 445L640 700C680 770 760 800 840 830 920 850 1000 850 1030 880",
  "M660 1125L720 1120 790 1145M750 1060L790 1145 835 1270M412 705L470 800 510 870",
];
const westFaint = [
  "M700 860L860 1040 1000 1210 1190 1440",
  "M1020 890L1070 1000 1150 1080 1250 1230 1390 1350 1540 1370 1568 1345",
  "M510 120C560 160 580 220 585 280 600 330 600 380 640 400L720 440M415 205L412 280",
  "M640 560C640 500 670 460 710 460M670 600C700 660 690 700 670 720M880 1020C870 960 920 960 940 1000",
];
const westLight = [
  "M110 620C200 600 270 590 320 540 370 480 410 460 440 490L560 640 650 750C720 810 850 870 1010 895",
  "M250 685C320 610 350 575 410 565 450 560 480 580 510 600",
  "M520 640C510 700 500 740 480 780M640 750C620 800 570 830 500 820M450 640C470 680 470 700 450 730M540 740L590 715M540 780L600 770",
  "M1160 980V1050M1100 1180C1100 1140 1130 1110 1150 1110M1040 1040C1100 1060 1160 1090 1215 1170L1340 1310C1420 1390 1500 1390 1568 1380",
];
const eastDark = [
  "M60 890L150 850 300 785 400 710 470 650 600 550 640 530 700 530 800 480 900 450 985 420",
  "M0 1305C60 1320 80 1270 110 1220 150 1190 200 1190 270 1240 330 1180 360 1130 420 1140L490 1170 600 1168 700 1182C740 1170 780 1130 830 1090L890 1020C960 1000 1010 920 1070 870 1110 830 1110 740 1180 692L1250 705 1290 697H1472",
  "M640 1280C680 1295 740 1260 800 1240M420 1275L530 1262M1100 850C1180 850 1250 870 1330 860 1400 850 1440 830 1472 790",
];
const eastFaint = [
  "M1075 340C1010 410 1000 450 990 500L940 700 880 900 845 960 846 1060",
  "M630 540C700 530 730 560 732 600L780 685 820 680M810 490V640M995 500L1060 520 1130 515 1140 600M850 685L935 695",
  "M180 1000C260 1000 250 930 290 920L330 950 340 1000 360 980 365 850 330 790M600 620L480 740 420 740 350 770M270 1130V1235",
];
const eastLight = [
  "M71 1330C120 1250 160 1230 200 1235 260 1280 320 1210 380 1170 450 1160 500 1200 560 1198 640 1180 700 1210 760 1180L890 1080 990 970 1080 890",
  "M720 740C760 740 780 760 800 780H860M740 770C760 850 700 880 710 950L770 1010M710 1010L700 1140M940 718H1140M1085 340L1010 440 945 700 880 880",
  "M1240 680L1440 380M990 740H1050V850H1000ZM1280 725H1440V755H1290zM1270 290L1265 400 1210 490M1160 790L1190 730 1250 740 1472 720",
  "M110 1130L120 1080 150 1060 180 1000M600 620L720 600M860 620L940 600 1130 620M730 1220L830 1130",
];

const MapCanvas = () => (
  <svg viewBox="844 289 1754 1883" className="h-full w-full">
    <defs>
      <clipPath id="west"><polygon points={westShape} /></clipPath>
      <clipPath id="east"><polygon points={eastShape} /></clipPath>
      <filter id="rough" x="-5%" y="-5%" width="110%" height="110%">
        <feTurbulence type="fractalNoise" baseFrequency=".045 .06" numOctaves="4" seed="7" result="n" />
        <feColorMatrix in="n" type="matrix" values="0 0 0 0 .5  0 0 0 0 .5  0 0 0 0 .5  2 0 0 0 -.72" result="g" />
        <feComposite in="g" in2="SourceGraphic" operator="in" result="c" />
        <feGaussianBlur in="c" stdDeviation=".8" />
      </filter>
      <filter id="bright" x="-5%" y="-5%" width="110%" height="110%">
        <feTurbulence type="fractalNoise" baseFrequency=".07 .03" numOctaves="3" seed="3" result="n" />
        <feColorMatrix in="n" type="matrix" values="0 0 0 0 1  0 0 0 0 1  0 0 0 0 1  4 0 0 0 -1.300" result="g" />
        <feComposite in="g" in2="SourceGraphic" operator="in" />
      </filter>
    </defs>
    <g transform="translate(940 980) scale(.510204 .420875)">
      <polygon points={westShape} fill="#e7e7e7" />
      <g clipPath="url(#west)" fill="none">
        <g filter="url(#rough)" stroke="#000">
          <path d="M508 80L440 150 350 260 297 328" strokeWidth="30" />
          <path d="M583 150L700 330 775 535 865 720 1020 840" strokeWidth="28" />
          <path d="M1040 900L1130 950 1280 965 1568 935" strokeWidth="38" />
          <path d="M400 690L530 910M590 1000L680 1130 780 1130 830 1280" strokeWidth="50" />
        </g>
        <g filter="url(#bright)" stroke="#fff">
          <path d="M700 1180L840 1310 960 1390 1040 1450" strokeWidth="30" />
          <path d="M1100 1470L1200 1470 1390 1462 1568 1415" strokeWidth="50" />
        </g>
        <g stroke="#bcbcbc" strokeWidth="2">{westDark.map((d) => <path key={d} d={d} />)}</g>
        <g stroke="#d2d2d2" strokeWidth="1.800">{westFaint.map((d) => <path key={d} d={d} />)}</g>
        <g stroke="#f3f3f3" strokeWidth="3">{westLight.map((d) => <path key={d} d={d} />)}</g>
        <path d="M190 365C130 400 118 440 117 490M122 515l12 20" stroke="#b0b0b0" strokeWidth="8" />
        <path d="M130 585L180 570 185 545" stroke="#969696" strokeWidth="7" />
      </g>
      <path d="M508 84L470 122 440 150 405 215 352 252 352 275 297 328 235 332 180 350 130 390 97 430" stroke="#b5b5b5" strokeWidth="2.500" fill="none" />
      <path d="M440 150L418 192 402 215M350 280L325 305" stroke="#858585" strokeWidth="5" fill="none" />
      <path d="M585 150L640 215 685 290M1040 870L1098 935M690 845L680 880 680 930 700 975M740 1010L755 1060 770 1110" stroke="#b4b4b4" strokeWidth="2.500" fill="none" />
      <path d="M830 1305L950 1385 1040 1455 1130 1465 1200 1480 1390 1488 1568 1453" stroke="#cfcfcf" strokeWidth="1.800" fill="none" />
      <path d="M322 685L313 711M1195 1480L1215 1465" stroke="#333" strokeWidth="4" />
      <path d="M1228 1415l12 28h-16z" fill="#9a9a9a" />
    </g>
    <g transform="translate(1700 1020) scale(.561167 .408163)">
      <polygon points={eastShape} fill="#e7e7e7" />
      <g clipPath="url(#east)" fill="none">
        <g filter="url(#rough)" stroke="#000">
          <path d="M60 865L150 820 300 755 410 700 450 625 560 560" strokeWidth="56" />
          <path d="M560 540L680 490 800 450 985 415" strokeWidth="56" />
          <path d="M860 1200L900 1290M1390 870L1420 920" strokeWidth="40" />
        </g>
        <g filter="url(#bright)" stroke="#fff">
          <path d="M60 1370L230 1285 350 1235 520 1235 600 1250" strokeWidth="62" />
          <path d="M880 1080L980 1000 1060 950 1110 870 1200 865" strokeWidth="26" />
        </g>
        <g stroke="#b4b4b4" strokeWidth="2">{eastDark.map((d) => <path key={d} d={d} />)}</g>
        <g stroke="#cfcfcf" strokeWidth="1.800">{eastFaint.map((d) => <path key={d} d={d} />)}</g>
        <g stroke="#f3f3f3" strokeWidth="2.500">{eastLight.map((d) => <path key={d} d={d} />)}</g>
      </g>
      <path d="M60 850L150 800 280 737 410 690 415 650 440 612 545 552 568 515 665 442 780 460 848 412" stroke="#b8b8b8" strokeWidth="2.500" fill="none" />
      <path d="M410 692L360 712 310 740M545 575L470 630M655 450L620 490" stroke="#a4a4a4" strokeWidth="8" fill="none" />
      <path d="M985 405L895 435M1450 140h22" stroke="#8f8f8f" strokeWidth="5" fill="none" />
      <path d="M60 1398L150 1362 310 1310 500 1275 600 1262" stroke="#c8c8c8" strokeWidth="2" fill="none" />
      <path d="M226 1318h8v6h-8z" fill="#111" />
    </g>
  </svg>
);

/* ---------- processing toolbox ---------- */
const toolRows: Row[] = [
  [0, "right", "history", "Recently used"],
  [0, "down", "qgis", "Raster terrain analysis"],
  [1, "sel", "gear", "Hillshade"],
  [0, "down", "gdal", "GDAL"],
  [1, "down", "", "Raster analysis"],
  [2, "", "gdal", "Hillshade"],
  [0, "down", "cube", "WhiteboxTools"],
  [1, "down", "", "Geomorphometric Analysis"],
  [2, "", "cube", "Hillshade"],
  [2, "", "cube", "HypsometricallyTintedHillshade"],
  [2, "", "cube", "MultidirectionalHillshade"],
  [1, "down", "", "LiDAR Tools"],
  [2, "", "cube", "LidarHillshade"],
];
const toolIndent = ["pl-[12px]", "pl-[52px]", "pl-[91px]"];

const Search = ({ children, className }: Kids & { className: string }) => (
  <div className={`flex items-center rounded-[5px] border-2 border-t-[3px] border-[#b2b2b2] bg-white ${className}`}>
    <svg viewBox="0 0 26 26" className="h-[26px] w-[26px] shrink-0" fill="none" stroke="#8c8c8c" strokeWidth="2.200"><circle cx="11" cy="11" r="9" /><path d="M17 18l7 7" strokeWidth="2.800" /></svg>
    {children}
  </div>
);

const VDots = () => (
  <div className="flex w-[13px] shrink-0 flex-col items-center justify-center gap-[4px]">
    {[0, 1, 2, 3, 4, 5].map((i) => <div key={i} className="h-[2px] w-[2px] bg-[#b4b4b4]" />)}
  </div>
);

const Field = ({ w, children, kind }: Kids & { w: string; kind?: "combo" | "spin" }) => (
  <div className={`flex ${kind === "combo" ? "h-12" : "h-[46px]"} items-stretch rounded-[5px] border-2 border-t-[3px] border-[#b4b4b4] bg-white ${w}`}>
    <span className="flex flex-1 items-center">{children}</span>
    {kind === "combo" && <div className="flex w-[40px] items-center justify-center border-l border-[#c4c4c4] bg-[#f8f8f8]"><Tri dir="down" /></div>}
    {kind === "spin" && <div className="flex w-[28px] flex-col items-center justify-center gap-[7px] border-l-2 border-[#c4c4c4]"><Tri dir="up" className="scale-90" /><Tri dir="down" className="scale-90" /></div>}
  </div>
);

export default function App() {
  return (
    <div className="h-[2382px] w-[3680px] overflow-hidden bg-white pl-[110px] pt-[74px] font-[Inter,'Noto_Sans',sans-serif] text-[25px] leading-none tracking-[.3px] text-[#262626]">
      <div className="flex h-[2162px] w-[3460px] flex-col overflow-hidden rounded-[22px] border-2 border-[#3c3c3c] bg-[#f5f5f5] shadow-[0_36px_80px_rgba(0,0,0,.41)]">
        <div className="flex h-[58px] shrink-0 items-center border-b-[3px] border-black bg-[#fdfdfd] pl-4">
          <div className="flex gap-4">
            <div className="h-6 w-6 rounded-full border border-[#c0261c] bg-[#dc2e22]" />
            <div className="h-6 w-6 rounded-full border border-[#7a5010] bg-[#976b22]" />
            <div className="h-6 w-6 rounded-full border border-[#256a18] bg-[#3b8526]" />
          </div>
          <div className="flex-1 pr-[124px] text-center text-[26px] font-bold tracking-[.35px] text-[#3c3c3c]">*Terrain_01 — QGIS [10-15-2022]</div>
        </div>

        <div className="flex h-[74px] shrink-0">
          <Group items={["new", "open", "save", "layout", "layoutMgr", "style"]} />
          <Group items={["hand", "pan", "zoomIn", "zoomOut", "zoomFull", "zoomSel", "zoomLayer", "zoomNative", "zoomLast", "zoomNext", "newMap", "new3d", "newBm", "bookmarks", "clock", "refresh"]} />
          <Group items={["select:dd", "selVal:dd", "deselect:dd", "selLoc"]} />
          <Group last items={["identify:on", "abacus", "gear:on", "sigma", "table:dd", "measure:dd", "tips", "gearRun:dd"]} />
        </div>
        <div className="flex h-[79px] shrink-0">
          <Group items={["sources", "gpkgNew", "shpNew", "feather", "memory", "mesh", "gpx"]} />
          <Group items={["edits", "pencil", "saveEdit", "addPts", "advDig:dd", "multiEdit", "trash", "cut", "copy", "paste", "undo", "redo"]} />
          <Group items={["tag", "diagram", "|", "tagPin", "tagRed", "|", "tagPinD", "tagEye", "tagMove", "tagRot", "tagEdit"]} />
          <Group items={["globe"]} extra={<span className="ml-[63px] mr-[1px] w-[18px] pb-1 text-[30px] font-medium text-[#333]">»</span>} />
          <Group items={["pyConsole"]} />
          <Group items={["help"]} />
          <Group last items={["sync"]} />
        </div>

        <div className="flex h-[1886px] shrink-0">
          <div className="flex w-[717px] shrink-0 flex-col">
            <PanelTitle>Browser</PanelTitle>
            <PanelBar items={["addLayer", "refresh", "filter", "collapse", "info"]} />
            <BrowserTree />
            <div className="flex h-3 items-center justify-center gap-[4px]">
              {[0, 1, 2, 3, 4, 5].map((i) => <div key={i} className="h-[2px] w-[2px] bg-[#b4b4b4]" />)}
            </div>
            <PanelTitle>Layers</PanelTitle>
            <PanelBar items={["brush", "addGroup", "eye", "filterD", "epsF:dd", "expand", "collapse", "remove"]} />
            <LayersTree />
          </div>
          <VDots />
          <div className="mt-[1px] w-[1757px] shrink-0 border border-[#c4c4c4] bg-white"><MapCanvas /></div>
          <VDots />
          <div className="flex w-[956px] shrink-0 flex-col">
            <PanelTitle>Processing Toolbox</PanelTitle>
            <PanelBar items={["gears3", "pyMenu", "history", "log", "|", "editIn", "|", "wrench"]} />
            <Search className="h-[48px] pl-4 pr-[16px]">
              <span className="ml-[15px] flex-1 text-[#1e1e1e]">hillshade</span>
              <svg viewBox="0 0 26 20" className="h-5 w-[26px]"><path d="M8 0h18v20H8L0 10z" fill="#8e8e8e" /><path d="M11 5l9 10M20 5l-9 10" stroke="#fff" strokeWidth="2" /></svg>
            </Search>
            <div className="flex-1 border-y border-l border-[#c0c0c0] bg-white pt-[1px]">
              {toolRows.map(([lv, arrow, icon, text], i) => (
                <div key={i} className={`flex items-center ${icon ? "h-9" : "h-8"} ${toolIndent[lv]} ${arrow === "sel" ? "bg-[#dcdcdc] text-black" : ""}`}>
                  <div className="flex w-[18px] shrink-0 justify-center">{arrow === "right" && <Tri dir="right" />}{arrow === "down" && <Tri dir="down" />}</div>
                  {icon && <div className="ml-[17px] shrink-0"><Icon n={icon} small /></div>}
                  <span className={`whitespace-pre ${icon === "cube" ? "ml-[10px]" : icon ? "ml-[12px]" : "ml-[17px]"}`}>{text}</span>
                </div>
              ))}
            </div>
          </div>
        </div>

        <div className="flex flex-1 items-center pl-[8px] text-[22px] tracking-[-.15px]">
          <Search className="h-[48px] w-[428px] pl-[15px]">
            <span className="ml-[15px] font-[Inter,'DejaVu_Sans',sans-serif] text-[25px] tracking-[.25px] text-[#7b7b7b]">Type to locate (⌘K)</span>
          </Search>
          <div className="w-[1278px] shrink-0" />
          <div className="w-[123px] shrink-0">Coordinate</div>
          <Field w="w-[217px] pl-[11px]">625800,4846900</Field>
          <svg viewBox="0 0 30 32" className="ml-[10px] h-8 w-[30px] shrink-0" fill="none" stroke="#111" strokeWidth="2">
            <ellipse cx="19" cy="23.500" rx="10" ry="8" fill="#b9a9a9" stroke="none" />
            <path d="M1.500 9C0 4 6 0 10.500 2.500L17 9 12 17.500 7 19z" fill="#fff" />
            <path d="M6 4.500l4.500 9M10 3.500l4 7" strokeWidth="3" />
            <ellipse cx="17" cy="23" rx="9" ry="7.500" transform="rotate(-20 17 23)" fill="#fff" />
            <path d="M7 19c4 1 9-4 9-8" strokeWidth="3" />
            <circle cx="18" cy="24.500" r="3" />
            <path d="M20 7.500l2-1M24 5.500l1-.5M27 3l1.500-1.500M1 21h2M4 18l1 1" strokeWidth="1.800" />
          </svg>
          <div className="ml-[27px] w-[64px] shrink-0 font-medium text-black">Scale</div>
          <Field kind="combo" w="w-[185px] pl-[7px]">1:79132</Field>
          <svg viewBox="0 0 24 30" className="ml-[24px] h-[30px] w-6 shrink-0" fill="none"><path d="M5.500 15V8a6.500 6.500 0 0113 0v7" stroke="#8a8a8a" strokeWidth="3" /><rect x="0" y="14" width="24" height="16" rx="2" fill="#5c5c5c" /></svg>
          <div className="ml-[19px] w-[107px] shrink-0 font-medium text-black">Magnifier</div>
          <Field kind="spin" w="w-[184px] pl-[7px]">100%</Field>
          <div className="ml-[18px] w-[107px] shrink-0">Rotation</div>
          <Field kind="spin" w="w-[184px] pl-[8px]">0.0 °</Field>
          <div className="ml-[14px]"><Check on /></div>
          <div className="ml-[10px] w-[106px] shrink-0">Render</div>
          <svg viewBox="0 0 30 28" className="h-7 w-[30px] shrink-0" fill="none" stroke="#555" strokeWidth="1.500">
            <ellipse cx="15" cy="14" rx="11" ry="13" fill="#c8c8c8" /><path d="M15 1v26M4 14h22M6 20h18M15 1c-7 6-7 20 0 26M15 1c7 6 7 20 0 26" /><path d="M1 14C3 5 9 2 15 2s12 3 14 12z" fill="#6a6a6a" fillOpacity=".6" />
          </svg>
          <div className="ml-[4px] w-[180px] shrink-0 font-medium text-black">EPSG:26915</div>
          <svg viewBox="0 0 32 30" className="h-[30px] w-8 shrink-0"><path d="M16 1c9 0 15 5 15 11.500 0 4-2 7-5 9l4 8-10-5.500c-11 2-19-4-19-11.500C1 6 7 1 16 1z" fill="#5c5c5c" /><g fill="#fff"><circle cx="9" cy="12.500" r="2.200" /><circle cx="16" cy="12.500" r="2.200" /><circle cx="23" cy="12.500" r="2.200" /></g></svg>
        </div>
      </div>
    </div>
  );
}
